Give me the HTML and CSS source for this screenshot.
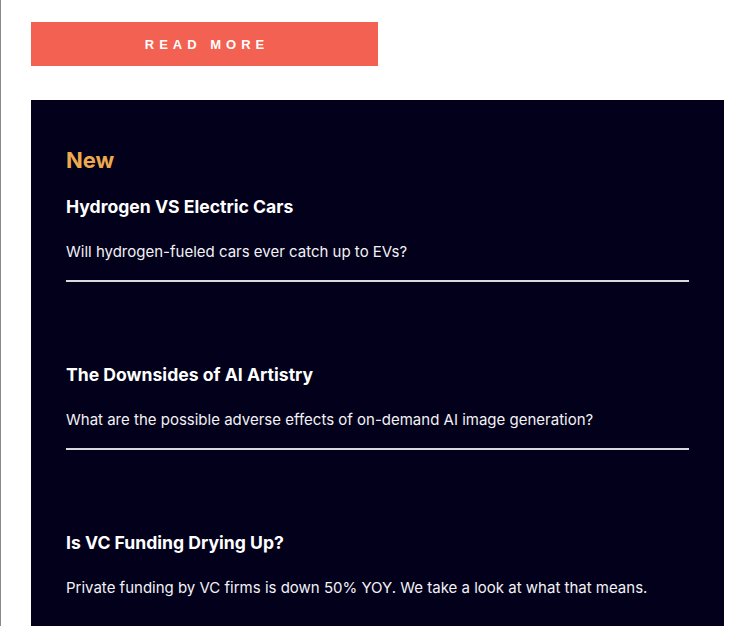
FILE: index.html
```html
<!DOCTYPE html>
<html>
<head>
<meta charset="utf-8">
<link rel="stylesheet" href="styles.css">
</head>
<body>
<div class="page">
  <a class="btn" href="#">READ MORE</a>
  <section class="panel">
    <h2 class="panel-title">New</h2>
    <article class="item">
      <h3 class="item-title">Hydrogen VS Electric Cars</h3>
      <p class="item-desc">Will hydrogen-fueled cars ever catch up to EVs?</p>
    </article>
    <article class="item">
      <h3 class="item-title">The Downsides of AI Artistry</h3>
      <p class="item-desc">What are the possible adverse effects of on-demand AI image generation?</p>
    </article>
    <article class="item item-last">
      <h3 class="item-title">Is VC Funding Drying Up?</h3>
      <p class="item-desc">Private funding by VC firms is down 50% YOY. We take a look at what that means.</p>
    </article>
  </section>
</div>
</body>
</html>
```
FILE: styles.css
```css
html, body {
  margin: 0;
  padding: 0;
  background: #ffffff;
  height: 100%;
  overflow: hidden;
}
.page {
  box-sizing: border-box;
  height: 100%;
  overflow: hidden;
  border-left: 1px solid #8a8a8a;
  padding: 22px 28px 0 30px;
  display: flex;
  flex-direction: column;
  align-items: flex-start;
}
.btn {
  flex-shrink: 0;
  display: flex;
  align-items: center;
  justify-content: center;
  width: 347px;
  height: 44px;
  background: #f26152;
  color: #ffffff;
  text-decoration: none;
  font-family: "Liberation Sans", Arial, sans-serif;
  font-weight: 700;
  font-size: 13px;
  letter-spacing: 5px;
  padding-left: 5px;
  box-sizing: border-box;
}
.panel {
  margin-top: 34px;
  width: 693px;
  box-sizing: border-box;
  flex: 1 1 auto;
  min-height: 0;
  overflow: hidden;
  background: #02001a;
  padding: 48px 35px 0 35px;
  font-family: Inter, "Noto Sans", sans-serif;
}
.panel-title {
  margin: 0 0 24px 0;
  font-size: 22px;
  line-height: 24px;
  font-weight: 700;
  color: #eea94f;
}
.item {
  border-bottom: 2px solid #d9d9de;
  padding-bottom: 17px;
  margin-bottom: 82px;
}
.item-last {
  border-bottom: none;
}
.item-title {
  margin: 0 0 23px 0;
  font-size: 17.6px;
  line-height: 22px;
  font-weight: 700;
  color: #ffffff;
}
.item-desc {
  margin: 0;
  font-size: 15px;
  line-height: 22px;
  font-weight: 400;
  color: #f2f2f5;
}
```
